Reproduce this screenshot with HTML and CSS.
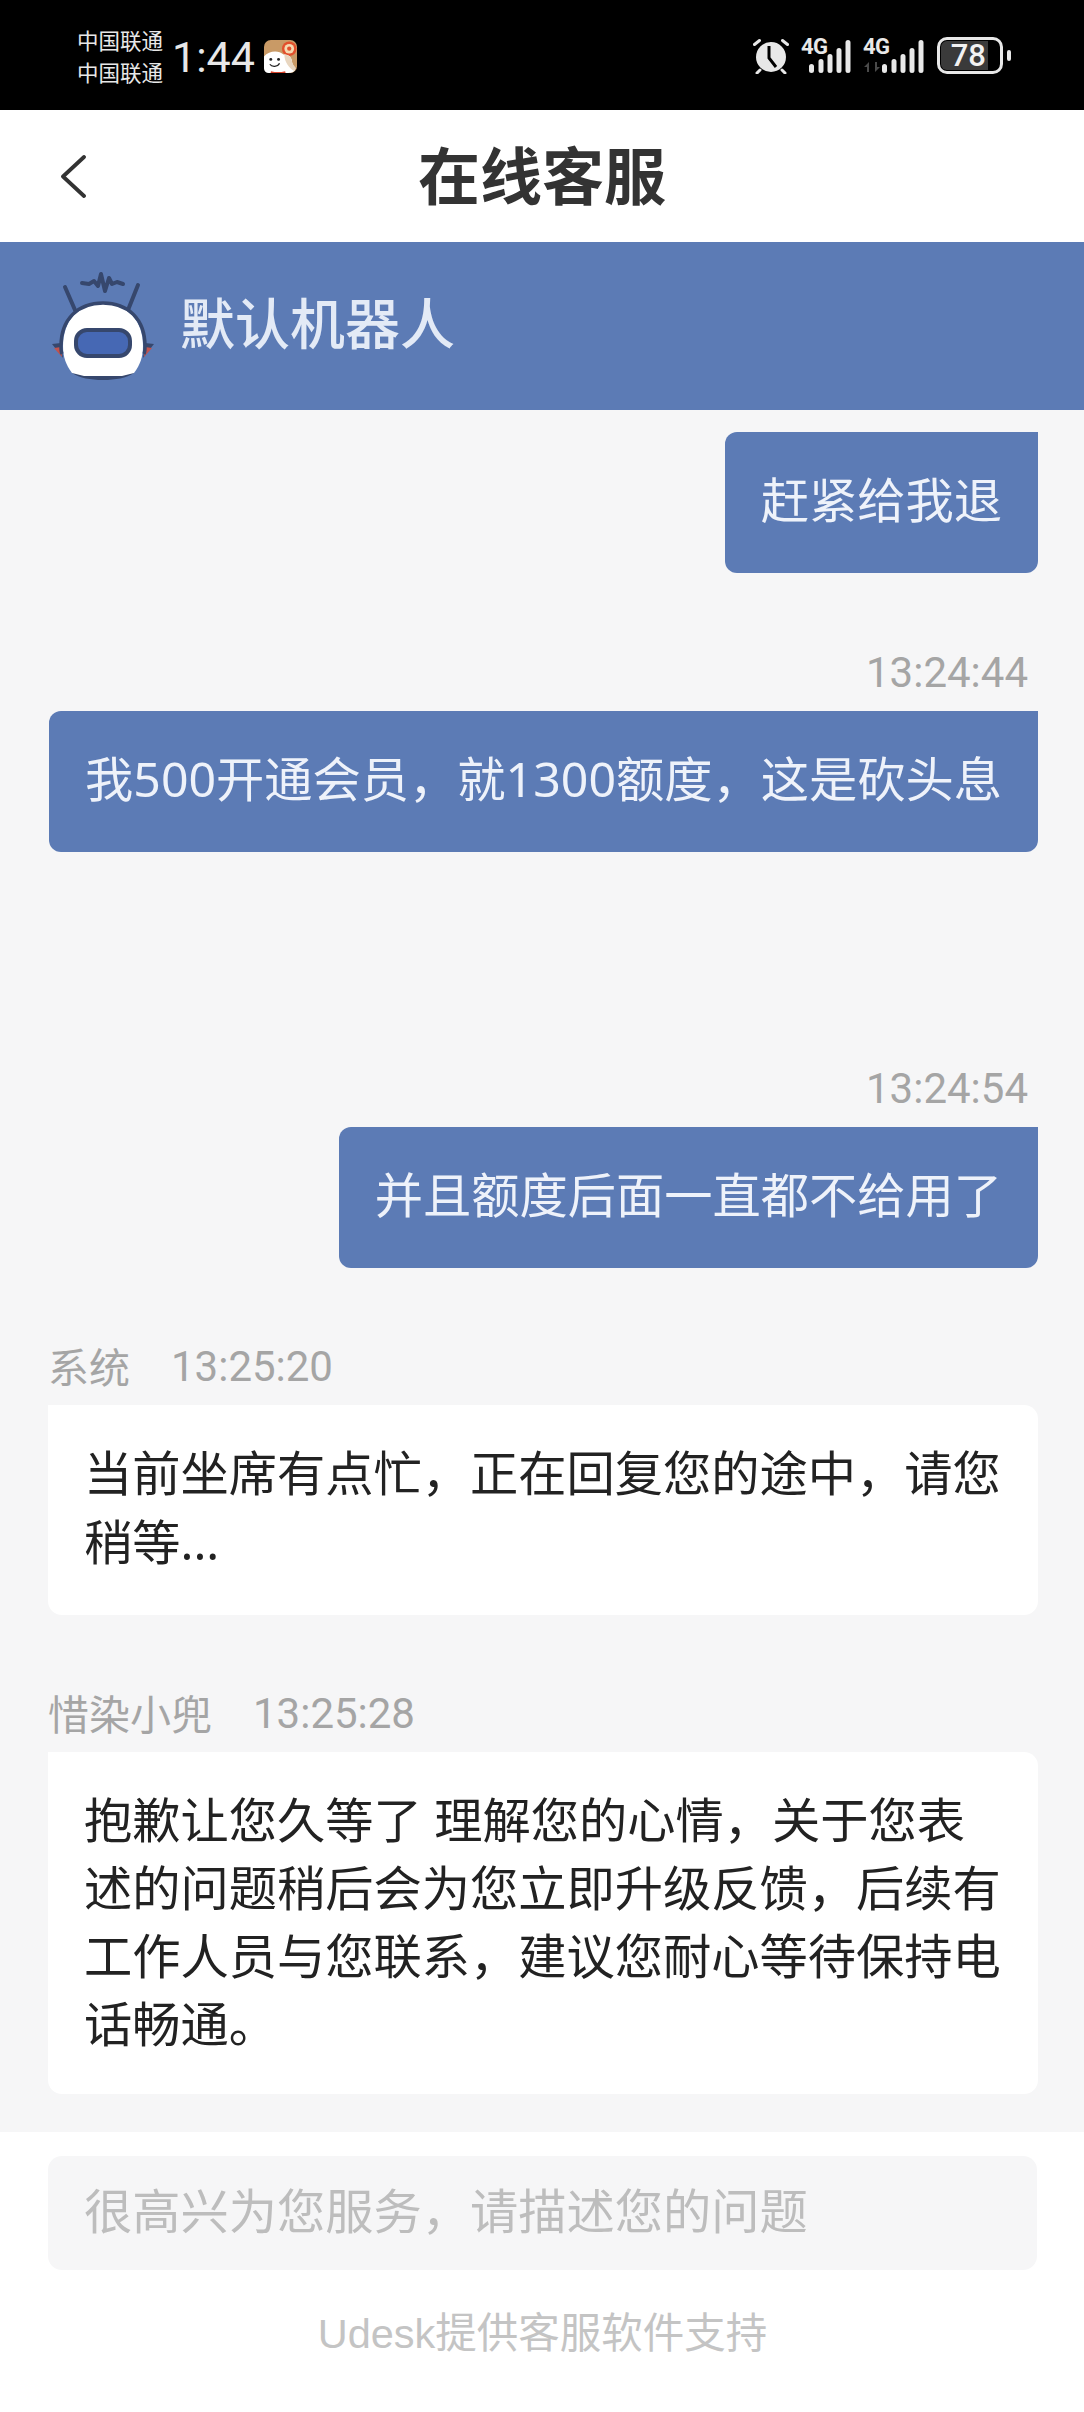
FILE: index.html
```html
<!DOCTYPE html>
<html lang="zh-CN">
<head>
<meta charset="utf-8">
<title>在线客服</title>
<link rel="stylesheet" href="styles.css">
</head>
<body>
<div class="page">
  <header class="status">
    <div class="carriers"><span>中国联通</span><span>中国联通</span></div>
    <div class="clock">1:44</div>
    <svg class="appicon" width="33" height="33" viewBox="0 0 34 34">
      <rect width="34" height="34" rx="7" fill="#c99a66"/>
      <circle cx="26" cy="9" r="7.500" fill="#e2502c"/>
      <circle cx="26" cy="9" r="5" fill="#f6d9b0"/>
      <circle cx="26" cy="9" r="2.200" fill="#e2502c"/>
      <path d="M0 17c5-6 15-7 20-2 5-1 9 3 9 8 1 4 3 5 3 8-2 3-5 3-8 3H5c-3 0-5-2-5-5z" fill="#fff"/>
      <path d="M21 15c5 0 8 4 8 9l4 5-2 3c-5-3-10-9-10-17z" fill="#e8d6c0"/>
      <circle cx="7" cy="20" r="1.500" fill="#222"/><circle cx="15" cy="20" r="1.500" fill="#222"/>
      <path d="M6 25c2 3 8 3 10-1" fill="none" stroke="#222" stroke-width="1.300"/>
      <path d="M7 33c4 1 11 1 15 0" fill="none" stroke="#d8422a" stroke-width="1.800"/>
    </svg>
    <div class="status-right">
      <svg class="alarm" width="36" height="36" viewBox="0 0 36 36">
        <circle cx="18" cy="19" r="15" fill="#e8e8e8"/>
        <path d="M16 8v12l7 9" fill="none" stroke="#000" stroke-width="3"/>
        <path d="M1.500 6.500l5-4M34.500 6.500l-5-4M7 32l-3 3M29 32l3 3" stroke="#e8e8e8" stroke-width="3" stroke-linecap="round"/>
      </svg>
      <div class="sim">
        <span class="net">4G</span>
        <svg class="bars" width="46" height="35" viewBox="0 0 46 35"><path d="M2.500 28.500v4M12 23.500v9M21 18.500v14M30 12.500v20M39 4.500v28"/></svg>
      </div>
      <div class="sim sim-data">
        <span class="net">4G</span>
        <svg class="updown" width="16" height="10" viewBox="0 0 16 10"><path d="M0 5l5-5v10h-2v-5zM16 5l-5 5v-10h2v5z" fill="#4a4a4a"/></svg>
        <svg class="bars" width="46" height="35" viewBox="0 0 46 35"><path d="M2.500 28.500v4M12 23.500v9M21 18.500v14M30 12.500v20M39 4.500v28"/></svg>
      </div>
      <div class="battery"><div class="level"><span>78</span></div></div>
      <div class="nub"></div>
    </div>
  </header>

  <nav class="nav">
    <svg class="back" width="26" height="44" viewBox="0 0 26 44"><path d="M24 2L3 21.500 24 41" fill="none" stroke="#333" stroke-width="3.800" stroke-linecap="round" stroke-linejoin="round"/></svg>
    <h1>在线客服</h1>
  </nav>

  <section class="agent">
    <svg class="robot" width="106" height="112" viewBox="0 0 106 112">
      <path d="M15 17l10 23M88 15L78 40" stroke="#36476d" stroke-width="4" stroke-linecap="round"/>
      <path d="M32 13l7 1 5-3 4 5 3-12 4 17 4-13 3 6 5-2 6 2" fill="none" stroke="#36476d" stroke-width="4" stroke-linejoin="round" stroke-linecap="round"/>
      <path d="M2 74l9-1 2 15zM104 74l-9-1-2 15z" fill="#36476d"/>
      <path d="M4 78l7-1 1 10zM102 78l-7-1-1 10z" fill="#c2534f"/>
      <path d="M22 103c8 5 18 7 31 7s23-2 31-7z" fill="#36476d"/>
      <path d="M13 76C13 50 29 34 53 34s40 16 40 42c0 11-3 19-9 27l-12 3H34l-12-3c-6-8-9-16-9-27z" fill="#fff"/>
      <path d="M12 84c-1-2-1-5-1-8C11 49 28 33 53 33s42 16 42 43c0 3 0 6-1 8" fill="none" stroke="#36476d" stroke-width="3.500"/>
      <rect x="26" y="60" width="54" height="26" rx="11" fill="#4668b4" stroke="#36476d" stroke-width="4"/>
    </svg>
    <div class="agent-name">默认机器人</div>
  </section>

  <main class="chat">
    <div class="msg mine first"><div class="bubble">赶紧给我退</div></div>
    <div class="msg mine m2"><div class="meta">13:24:44</div><div class="bubble">我500开通会员，就1300额度，这是砍头息</div></div>
    <div class="msg mine m3"><div class="meta">13:24:54</div><div class="bubble">并且额度后面一直都不给用了</div></div>
    <div class="msg theirs m4"><div class="meta"><span class="who">系统</span><span>13:25:20</span></div><div class="bubble">当前坐席有点忙，正在回复您的途中，请您稍等...</div></div>
    <div class="msg theirs m5"><div class="meta"><span class="who">惜染小兜</span><span>13:25:28</span></div><div class="bubble">抱歉让您久等了 理解您的心情，关于您表述的问题稍后会为您立即升级反馈，后续有工作人员与您联系，建议您耐心等待保持电话畅通。</div></div>
  </main>

  <footer class="bottom">
    <div class="input">很高兴为您服务，请描述您的问题</div>
    <div class="credit">Udesk提供客服软件支持</div>
  </footer>
</div>
</body>
</html>
```
FILE: styles.css
```css
* { box-sizing: border-box; }
html, body { margin: 0; padding: 0; }
body { font-family: "Noto Sans CJK SC", "Noto Sans", sans-serif; background: #fff; }
.page { width: 1084px; height: 2412px; display: flex; flex-direction: column; overflow: hidden; }

.status { height: 110px; background: #000; color: #e8e8e8; display: flex; align-items: flex-start; padding: 0 73px 0 77px; flex: none; }
.carriers { display: flex; flex-direction: column; font-size: 21.500px; line-height: 32px; width: 95px; margin-top: 24px; }
.clock { font-family: "Roboto", sans-serif; font-size: 43px; font-weight: 400; line-height: 44px; margin-top: 35px; width: 92px; }
.appicon { margin-top: 40px; }
.status-right { margin-left: auto; margin-top: 37px; display: flex; align-items: flex-start; }
.alarm { margin: 1px 12px 0 0; }
.sim { position: relative; width: 62px; height: 36px; }
.net { position: absolute; left: 0; top: 0; font-family: "Roboto", sans-serif; font-weight: 700; font-size: 22px; line-height: 20px; letter-spacing: -0.5px; }
.bars { position: absolute; left: 7.500px; top: 1px; stroke: #e8e8e8; stroke-width: 5; stroke-linecap: round; fill: none; }
.sim-data .bars { left: 18.500px; }
.updown { position: absolute; left: 1px; top: 25px; }
.battery { width: 66px; height: 37px; border: 3px solid #e8e8e8; border-radius: 10px; padding: 1px; margin-left: 12px; }
.level { width: 47px; height: 29px; background: #3a3a3a; border-radius: 6px 0 0 6px; display: flex; align-items: center; justify-content: flex-end; }
.level span { font-family: "Roboto", sans-serif; font-size: 31px; font-weight: 500; color: #f2f2f2; line-height: 29px; margin-right: 2px; }
.nub { width: 4px; height: 11px; background: #e8e8e8; border-radius: 2px; margin: 13px 0 0 4px; }

.nav { height: 132px; flex: none; background: #fff; display: flex; align-items: center; justify-content: center; position: relative; padding-bottom: 6px; }
.nav h1 { margin: 0; font-size: 62px; font-weight: 700; color: #333; line-height: 1; }
.back { position: absolute; left: 60px; top: 45px; }

.agent { height: 168px; flex: none; background: #5c7bb5; display: flex; align-items: center; padding-left: 50px; }
.agent-name { font-size: 55px; font-weight: 500; color: #e3eaf6; margin: -11px 0 0 24px; line-height: 1; }

.chat { flex: 1; background: #f6f6f7; padding: 22px 46px 0 48px; display: flex; flex-direction: column; }
.msg { display: flex; flex-direction: column; }
.mine { align-items: flex-end; }
.theirs { align-items: stretch; }
.bubble { font-family: "Noto Sans", "Noto Sans CJK SC", sans-serif; font-size: 48.250px; line-height: 68px; }
.mine .bubble { background: #5c7bb5; color: #eef2fa; padding: 33px 36px 40px; border-radius: 12px 0 12px 12px; }
.theirs .bubble { background: #fff; color: #222; padding: 33px 36px 37px; border-radius: 0 14px 14px 14px; }
.m4 .bubble { line-height: 69px; padding: 33px 36px 39px; }
.meta { font-size: 42px; color: #a5a5a5; line-height: 28px; height: 52px; padding-right: 10px; font-family: "Roboto", "Noto Sans CJK SC", sans-serif; }
.theirs .meta { padding-right: 0; display: flex; }
.who { margin-right: 41px; font-size: 41px; padding-top: 2px; }
.m2 { margin-top: 86px; }
.m3 { margin-top: 223px; }
.m4 { margin-top: 85px; }
.m5 { margin-top: 85px; }

.bottom { height: 280px; flex: none; background: #fff; padding: 24px 47px 0 48px; }
.input { height: 114px; background: #f6f6f7; border-radius: 14px; font-size: 48.250px; color: #bdbdbd; padding-left: 36px; line-height: 104px; }
.credit { text-align: center; font-size: 41.500px; color: #c4c4c4; margin-top: 38px; line-height: 52px; font-family: "Liberation Sans", "Noto Sans CJK SC", sans-serif; }
```
